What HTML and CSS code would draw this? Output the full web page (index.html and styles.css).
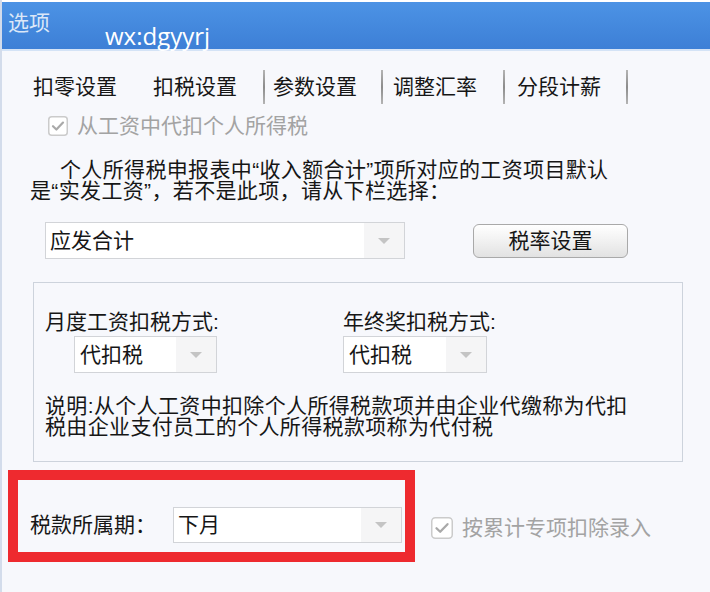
FILE: index.html
```html
<!DOCTYPE html>
<html lang="zh-CN">
<head>
<meta charset="utf-8">
<title>选项</title>
<link rel="stylesheet" href="styles.css">
</head>
<body>
<div class="win">
  <div class="titlebar">
    <span class="title">选项</span>
    <span class="wm">wx:dgyyrj</span>
  </div>
  <div class="tabs">
    <span class="tab t1">扣零设置</span>
    <span class="tab t2">扣税设置</span>
    <i class="sep s1"></i>
    <span class="tab t3">参数设置</span>
    <i class="sep s2"></i>
    <span class="tab t4">调整汇率</span>
    <i class="sep s3"></i>
    <span class="tab t5">分段计薪</span>
    <i class="sep s4"></i>
  </div>
  <div class="panel">
    <label class="chk chk-top disabled">
      <svg class="box" width="20" height="20" viewBox="0 0 20 20"><rect x="0.75" y="0.75" width="18.5" height="18.5" rx="3" fill="#fff" stroke="#cbcbcb" stroke-width="1.5"/><path d="M5 10.2 L8.4 13.5 L15 6.6" fill="none" stroke="#a9a9a9" stroke-width="2.2" stroke-linecap="round" stroke-linejoin="round"/></svg>
      <span>从工资中代扣个人所得税</span>
    </label>
    <p class="note">个人所得税申报表中“收入额合计”项所对应的工资项目默认<br>是“实发工资”，若不是此项，请从下栏选择：</p>
    <div class="row1">
      <div class="combo combo-wide"><span class="val">应发合计</span><span class="drop"><i class="arrow"></i></span></div>
      <button class="btn">税率设置</button>
    </div>
    <div class="group">
      <div class="cols">
        <div class="col col1">
          <div class="lbl">月度工资扣税方式:</div>
          <div class="combo combo-small c1"><span class="val">代扣税</span><span class="drop"><i class="arrow"></i></span></div>
        </div>
        <div class="col col2">
          <div class="lbl">年终奖扣税方式:</div>
          <div class="combo combo-small c2"><span class="val">代扣税</span><span class="drop"><i class="arrow"></i></span></div>
        </div>
      </div>
      <p class="explain">说明:从个人工资中扣除个人所得税款项并由企业代缴称为代扣<br>税由企业支付员工的个人所得税款项称为代付税</p>
    </div>
    <div class="row2">
      <div class="redbox">
        <span class="lbl2">税款所属期：</span>
        <div class="combo combo-period"><span class="val">下月</span><span class="drop"><i class="arrow"></i></span></div>
      </div>
      <label class="chk chk-bottom disabled">
        <svg class="box" width="22" height="22" viewBox="0 0 22 22"><rect x="0.75" y="0.75" width="20.5" height="20.5" rx="3.5" fill="#fff" stroke="#cbcbcb" stroke-width="1.5"/><path d="M5.5 11.2 L9.2 14.8 L16.5 7.2" fill="none" stroke="#a9a9a9" stroke-width="2.3" stroke-linecap="round" stroke-linejoin="round"/></svg>
        <span>按累计专项扣除录入</span>
      </label>
    </div>
  </div>
</div>
</body>
</html>
```

FILE: styles.css
```css
* { box-sizing: border-box; }
html, body { margin: 0; padding: 0; }
body {
  width: 710px;
  height: 592px;
  overflow: hidden;
  background: #f7f8fc;
  font-family: "Liberation Sans", "Noto Sans CJK SC", sans-serif;
  font-size: 21px;
  color: #161616;
}
.win {
  width: 710px;
  height: 592px;
  border-left: 2px solid #d3dceb;
  background: #f7f8fc;
}
.titlebar {
  height: 51px;
  border-top: 2px solid #ffffff;
  border-bottom: 2px solid #d4e3f6;
  background: linear-gradient(#4c93e5, #3d7fd6);
  display: flex;
  align-items: flex-start;
  padding-left: 6px;
}
.title {
  margin-top: 9px;
  font-size: 21px;
  line-height: 24px;
  color: #dbe7f8;
}
.wm {
  margin-top: 20px;
  margin-left: 55px;
  font-family: "Open Sans", "Liberation Sans", sans-serif;
  font-size: 24px;
  line-height: 28px;
  color: #ffffff;
}
.tabs {
  display: flex;
  align-items: center;
  height: 34px;
  margin-top: 19px;
  padding-left: 31px;
}
.tab {
  font-size: 21px;
  line-height: 24px;
  white-space: nowrap;
}
.t1 { margin-right: 36px; }
.t2 { margin-right: 26px; }
.t3 { margin-left: 8px; margin-right: 24px; }
.t4 { margin-left: 10px; margin-right: 26px; }
.t5 { margin-left: 12px; margin-right: 25px; }
.sep {
  display: block;
  width: 2px;
  height: 34px;
  background: linear-gradient(#b4b4b4, #8c8c8c 50%, #b4b4b4);
}
.panel { position: relative; }
.chk {
  display: flex;
  align-items: center;
  height: 24px;
  line-height: 24px;
}
.chk .box { flex: none; }
.disabled { color: #a3a3a3; }
.chk-top {
  margin-top: 10px;
  margin-left: 46px;
}
.chk-top span { margin-left: 9px; }
.note {
  margin: 21px 0 0 28px;
  line-height: 21px;
  text-indent: 30px;
  letter-spacing: 0.35px;
}
.row1 {
  display: flex;
  align-items: center;
  margin-top: 21px;
  margin-left: 43px;
}
.combo {
  display: flex;
  align-items: center;
  background: #ffffff;
  border: 1px solid #d2d4d8;
}
.combo .val {
  flex: 1;
  padding-left: 4px;
  line-height: 24px;
  white-space: nowrap;
}
.combo .drop {
  align-self: stretch;
  width: 40px;
  background: #f5f5f6;
  display: flex;
  align-items: center;
  justify-content: center;
}
.arrow {
  display: block;
  width: 0;
  height: 0;
  border-left: 6px solid transparent;
  border-right: 6px solid transparent;
  border-top: 6px solid #c4c4c4;
}
.combo-wide { width: 360px; height: 37px; }
.btn {
  margin-left: 68px;
  width: 155px;
  height: 34px;
  padding: 0;
  border: 1px solid #a9a9a9;
  border-radius: 6px;
  background: linear-gradient(#ffffff, #f1f1f1 50%, #e2e2e2);
  font-family: inherit;
  font-size: 21px;
  line-height: 24px;
  color: #161616;
}
.group {
  margin: 23px 0 0 31px;
  width: 650px;
  height: 180px;
  border: 1px solid #cdd3dc;
  padding: 27px 0 0 11px;
}
.cols { display: flex; }
.col1 { width: 298px; }
.lbl { line-height: 24px; white-space: nowrap; }
.combo-small { height: 37px; margin-top: 2px; }
.c1 { width: 143px; margin-left: 29px; }
.c2 { width: 144px; }
.combo-small .val { padding-left: 5px; }
.explain {
  margin: 22px 0 0 0;
  line-height: 21px;
  letter-spacing: 0.35px;
}
.row2 {
  display: flex;
  align-items: flex-start;
  margin-top: 8px;
  margin-left: 6px;
}
.redbox {
  width: 407px;
  height: 92px;
  border: 10px solid #ee2a2f;
  display: flex;
  align-items: flex-start;
  padding: 27px 3px 0 12px;
}
.lbl2 {
  line-height: 24px;
  margin-top: 6px;
  white-space: nowrap;
}
.combo-period {
  width: 229px;
  height: 36px;
  margin-left: auto;
}
.combo-period .val { padding-left: 4px; }
.chk-bottom {
  margin-top: 46px;
  margin-left: 16px;
}
.chk-bottom span { margin-left: 9px; }
```
